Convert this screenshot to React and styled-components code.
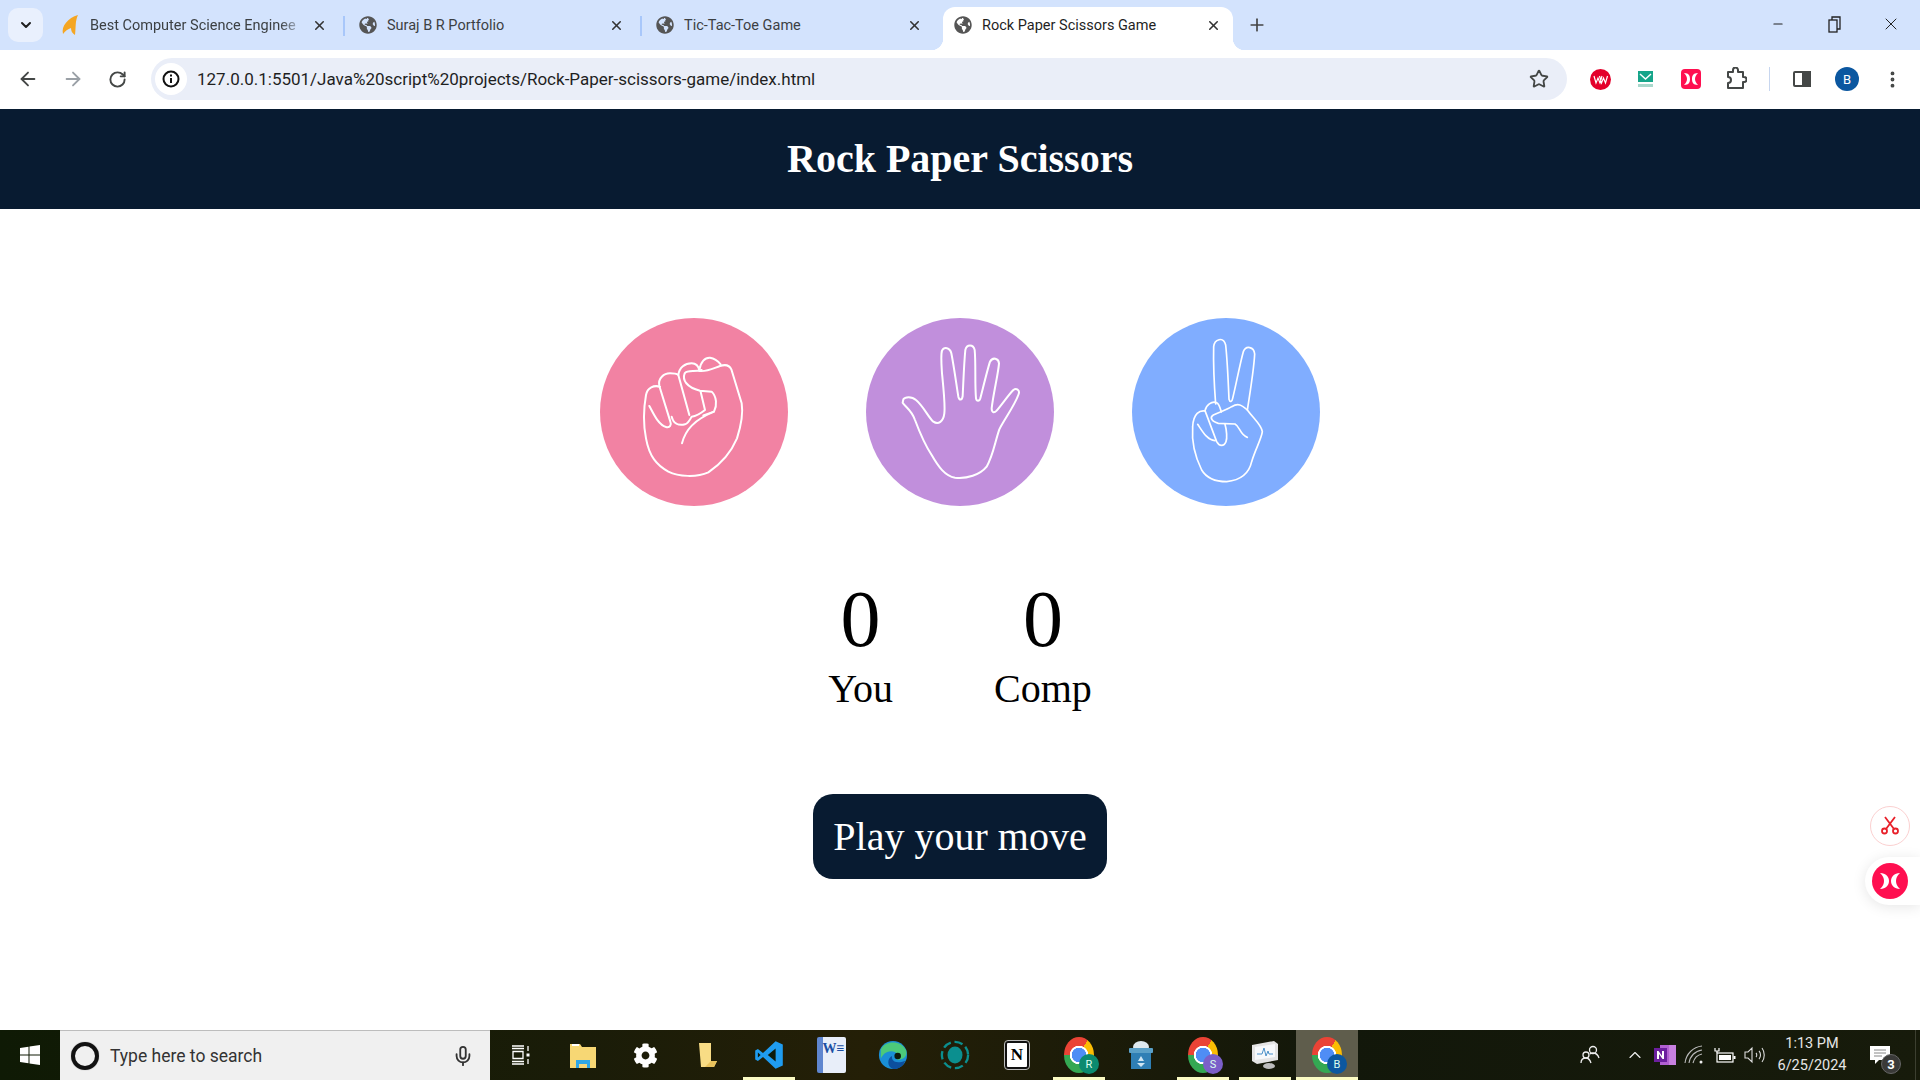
import React from 'react';
import styled, { createGlobalStyle } from 'styled-components';
import { ArrowLeft, ArrowRight, RotateCw, Star, MoreVertical, ChevronDown, ChevronUp, Minus, Plus, X, Mic } from 'lucide-react';
import { FaGlobeAmericas, FaCog } from 'react-icons/fa';

const GlobalStyle = createGlobalStyle`
  html, body { margin: 0; padding: 0; background: #fff; }
  body { font-family: "Liberation Serif", "Times New Roman", serif; overflow: hidden; }
  * { box-sizing: border-box; }
`;

const uiFont = `Roboto, "Open Sans", sans-serif`;

const Page = styled.div`
  width: 1920px;
  height: 1080px;
  display: flex;
  flex-direction: column;
`;

const TabStrip = styled.div`
  height: 50px;
  background: #d3e3fd;
  display: flex;
  align-items: flex-end;
  padding-left: 8px;
  font-family: ${uiFont};
`;
const TabSearch = styled.div`
  width: 35px;
  height: 34px;
  margin-bottom: 8px;
  margin-right: 5px;
  border-radius: 10px;
  background: #e9f0fd;
  display: flex;
  align-items: center;
  justify-content: center;
  color: #1f1f1f;
`;
const Tab = styled.div`
  position: relative;
  width: ${(props) => props.$width}px;
  height: 43px;
  padding: 0 ${(props) => props.$padRight}px 7px ${(props) => props.$padLeft}px;
  display: flex;
  align-items: center;
  font-size: 14.5px;
  color: #3c4043;
  background: ${(props) => (props.$active ? '#fff' : 'transparent')};
  border-radius: 12px 12px 0 0;
  ${(props) =>
    props.$active &&
    `
    color: #1f1f1f;
    &::before, &::after {
      content: "";
      position: absolute;
      bottom: 0;
      width: 12px;
      height: 12px;
    }
    &::before { left: -12px; background: radial-gradient(circle at 0 0, transparent 12px, #fff 12.5px); }
    &::after { right: -12px; background: radial-gradient(circle at 100% 0, transparent 12px, #fff 12.5px); }
  `}
`;
const TabDivider = styled.span`
  position: absolute;
  right: 0;
  top: 9px;
  width: 2px;
  height: 20px;
  background: #a8c7fa;
`;
const TabTitle = styled.span`
  flex: 1;
  margin-left: 10px;
  white-space: nowrap;
  mask-image: ${(props) => (props.$fade ? 'linear-gradient(90deg, #000 88%, transparent)' : 'none')};
`;
const TabClose = styled(X)`
  flex: none;
  color: #333;
  margin-left: 6px;
`;
const NewTab = styled.div`
  margin: 0 0 15px 14px;
  height: 20px;
  color: #444;
`;
const WindowControls = styled.div`
  margin-left: auto;
  height: 100%;
  display: flex;
  align-items: center;
  padding-bottom: 2px;
  color: #222;
`;
const WindowButton = styled.div`
  width: ${(props) => props.$width}px;
  display: flex;
  justify-content: center;
`;

const Toolbar = styled.div`
  height: 59px;
  background: #fff;
  border-radius: 10px 10px 0 0;
  display: flex;
  align-items: center;
  padding: 0 0 1px 5px;
`;
const NavButton = styled.div`
  width: 45px;
  display: flex;
  justify-content: center;
  color: ${(props) => (props.$disabled ? '#9aa0a6' : '#444746')};
`;
const Omnibox = styled.div`
  width: 1416px;
  height: 42px;
  margin-left: 11px;
  border-radius: 21px;
  background: #eaeef8;
  display: flex;
  align-items: center;
  padding: 0 18px 0 4px;
  font-family: ${uiFont};
  font-size: 17px;
  color: #1f1f1f;
`;
const InfoBadge = styled.div`
  width: 32px;
  height: 32px;
  border-radius: 50%;
  background: #fff;
  display: flex;
  align-items: center;
  justify-content: center;
  margin-right: 10px;
`;
const UrlText = styled.span`
  flex: 1;
  white-space: nowrap;
`;
const ExtensionBar = styled.div`
  flex: 1;
  display: flex;
  align-items: center;
  padding-left: 11px;
  color: #444746;
`;
const ExtensionSlot = styled.div`
  width: ${(props) => props.$width || 45}px;
  display: flex;
  justify-content: center;
`;
const ToolbarDivider = styled.div`
  width: 1px;
  height: 24px;
  background: #c7d6ef;
  margin: 0 10px 0 11px;
`;
const ProfileBadge = styled.div`
  width: 24px;
  height: 24px;
  border-radius: 50%;
  background: #0b57a0;
  color: #fff;
  font-family: ${uiFont};
  font-size: 13px;
  display: flex;
  align-items: center;
  justify-content: center;
`;

const Header = styled.header`
  height: 100px;
  padding-bottom: 1px;
  background: #081b31;
  color: #fff;
  display: flex;
  align-items: center;
  justify-content: center;
`;
const Title = styled.h1`
  margin: 0;
  font-size: 40px;
  font-weight: 700;
`;

const Main = styled.main`
  position: relative;
  flex: 1;
  display: flex;
  flex-direction: column;
  align-items: center;
  padding-top: 109px;
  background: #fff;
`;
const Choices = styled.div`
  display: flex;
  gap: 78px;
`;
const Choice = styled.div`
  width: 188px;
  height: 188px;
  border-radius: 50%;
  background: ${(props) => props.$color};
`;
const Scores = styled.div`
  display: flex;
  gap: 101px;
  margin-top: 68px;
  text-align: center;
  color: #000;
`;
const ScoreNumber = styled.div`
  font-size: 80px;
`;
const ScoreLabel = styled.div`
  font-size: 40px;
`;
const PlayButton = styled.div`
  margin-top: 82px;
  width: 294px;
  height: 85px;
  border-radius: 20px;
  background: #081b31;
  color: #fff;
  font-size: 40px;
  display: flex;
  align-items: center;
  justify-content: center;
`;
const FloatCut = styled.div`
  position: absolute;
  left: 1870px;
  top: 597px;
  width: 40px;
  height: 40px;
  border-radius: 50%;
  background: #fff;
  border: 1px solid #fbd0d0;
  display: flex;
  align-items: center;
  justify-content: center;
`;
const FloatDock = styled.div`
  position: absolute;
  right: 0;
  top: 648px;
  width: 55px;
  height: 48px;
  border-radius: 24px 0 0 24px;
  background: #fff;
  box-shadow: 0 2px 14px rgba(0, 0, 0, 0.1);
  display: flex;
  align-items: center;
  padding-left: 7px;
`;

const Taskbar = styled.footer`
  height: 50px;
  display: flex;
  background: linear-gradient(90deg, #0f1a05 0%, #1a1c08 30%, #241f07 45%, #12170a 70%, #171b0b 100%);
  font-family: ${uiFont};
  color: #fff;
`;
const StartButton = styled.div`
  width: 60px;
  display: flex;
  align-items: center;
  justify-content: center;
`;
const SearchBox = styled.div`
  width: 430px;
  background: #f0f0f0;
  border-top: 1px solid #bdbdbd;
  display: flex;
  align-items: center;
  padding: 0 16px 0 11px;
  color: #333;
  font-size: 17.5px;
`;
const CortanaRing = styled.div`
  width: 28px;
  height: 28px;
  border-radius: 50%;
  border: 4px solid #111;
  box-shadow: 0 0 1px #777;
  margin-right: 11px;
`;
const SearchText = styled.span`
  flex: 1;
`;
const TaskSlot = styled.div`
  position: relative;
  width: 62px;
  display: flex;
  align-items: center;
  justify-content: center;
  background: ${(props) => (props.$active ? '#5f5d4c' : 'transparent')};
  &::after {
    content: "";
    display: ${(props) => (props.$open ? 'block' : 'none')};
    position: absolute;
    bottom: 0;
    left: ${(props) => (props.$active ? 0 : 5)}px;
    right: ${(props) => (props.$active ? 0 : 5)}px;
    height: 3px;
    background: #fbfbc4;
  }
`;
const Tray = styled.div`
  margin-left: auto;
  display: flex;
  align-items: center;
  padding-right: 4px;
`;
const TrayIcon = styled.div`
  width: 30px;
  display: flex;
  justify-content: center;
  margin-right: ${(props) => props.$gap || 0}px;
  color: #eee;
`;
const Clock = styled.div`
  width: 84px;
  text-align: center;
  font-size: 14.5px;
  line-height: 22px;
  color: #e6e6e6;
`;
const Notifications = styled.div`
  position: relative;
  width: 52px;
  height: 100%;
  margin-right: 9px;
  display: flex;
  align-items: center;
  justify-content: center;
`;
const NotifCount = styled.span`
  position: absolute;
  left: 27px;
  top: 24px;
  width: 20px;
  height: 20px;
  border-radius: 50%;
  background: #3a3a38;
  border: 1px solid #666;
  font-size: 13px;
  font-weight: 700;
  display: flex;
  align-items: center;
  justify-content: center;
`;
const ShowDesktop = styled.div`
  width: 1px;
  height: 100%;
  background: #3c3f30;
`;

const ChromeBall = styled.div`
  position: relative;
  width: 30px;
  height: 36px;
  display: flex;
  align-items: center;
  justify-content: center;
  &::before {
    content: "";
    width: 30px;
    height: 36px;
    border-radius: 50%;
    background: radial-gradient(circle, #4f8df5 0 7px, #fff 7.5px 9px, transparent 9.5px),
      conic-gradient(from 30deg, #fbbc04 0 120deg, #34a853 120deg 240deg, #ea4335 240deg 360deg);
  }
`;
const ChromeProfile = styled.span`
  position: absolute;
  right: -5px;
  bottom: -1px;
  width: 20px;
  height: 20px;
  border-radius: 50%;
  background: ${(props) => props.$color};
  font-size: 11px;
  color: #dfe;
  display: flex;
  align-items: center;
  justify-content: center;
`;
const WordDoc = styled.div`
  width: 29px;
  height: 36px;
  background: linear-gradient(90deg, #5f86cf 0 22%, #e8eef9 22%);
  border-radius: 2px;
  color: #1b4fa3;
  font-family: "Liberation Serif", serif;
  font-weight: 700;
  font-size: 14px;
  padding: 4px 0 0 6px;
`;
const NotionBox = styled.div`
  width: 24px;
  height: 28px;
  background: #fff;
  border: 2px solid #111;
  outline: 1px solid #bbb;
  border-radius: 3px;
  color: #000;
  font-family: "Liberation Serif", serif;
  font-weight: 700;
  font-size: 17px;
  display: flex;
  align-items: center;
  justify-content: center;
`;

const FistIcon = () => (
  <svg width="188" height="188" viewBox="30 24 564 564" fill="none" stroke="#fff" strokeWidth="6" strokeLinecap="round" strokeLinejoin="round">
    <path d="M210 230C192 225 172 232 168 255C160 300 160 345 168 385C178 440 200 465 235 485C265 500 320 503 355 487C392 462 422 430 441 385C452 350 460 310 455 280L424 178C418 165 405 163 390 168C370 175 350 186 328 183" />
    <path d="M178 288C190 310 205 345 228 351C240 354 245 345 241 335L208 228C203 205 222 190 240 190C250 190 258 190 265 195" />
    <path d="M245 320C250 340 265 348 285 343C295 340 300 330 305 320C320 318 335 308 345 300L332 245" />
    <path d="M265 195L298 315M265 195C268 172 285 160 305 160C315 160 325 165 328 182" />
    <path d="M328 180C332 155 345 142 360 143C375 145 388 158 392 163" />
    <path d="M335 180C315 187 292 178 284 190C276 210 290 232 330 242L365 245C380 260 382 285 372 305L340 316" />
    <path d="M276 400C286 360 312 330 372 305" />
  </svg>
);

const PaperIcon = () => (
  <svg width="188" height="188" viewBox="-42 -36 564 564" fill="none" stroke="#fff" strokeWidth="6" strokeLinecap="round" strokeLinejoin="round">
    <path d="M70 208C75 200 95 198 108 210C130 228 145 262 160 275C175 285 190 275 193 250C196 225 190 170 186 130C184 100 182 75 186 62C192 50 210 52 214 70C222 110 230 170 235 200C238 212 246 212 248 198C250 160 252 100 256 60C260 42 280 42 284 60C288 100 284 160 288 205C290 215 298 215 301 205C310 170 322 120 330 95C338 80 356 85 357 100C355 130 340 190 335 235C335 248 342 250 350 242C365 225 385 195 400 180C410 172 420 182 416 192C405 225 375 265 358 298C345 335 340 375 320 410C300 435 260 447 225 443C195 438 175 410 155 375C135 345 120 310 105 270C95 240 75 230 68 218Z" />
  </svg>
);

const ScissorsIcon = () => (
  <svg width="188" height="188" viewBox="-114 -36 564 564" fill="none" stroke="#fff" strokeWidth="5" strokeLinecap="round" strokeLinejoin="round">
    <path d="M137 222C133 170 130 90 131 50C133 28 160 18 167 45C172 90 175 160 177 208C180 218 186 216 188 205C198 165 210 100 220 65C228 45 252 50 254 72C252 115 240 190 232 240" />
    <path d="M105 242C108 226 125 212 140 218C148 222 150 232 154 246" />
    <path d="M165 283C170 300 172 325 168 335C162 350 148 350 140 335L105 242" />
    <path d="M105 243C90 240 70 250 68 290C65 330 75 380 95 420C110 445 140 455 170 455C200 452 235 440 245 395C255 360 275 325 277 305C275 285 250 265 232 240C215 225 205 218 185 230C170 240 150 245 130 255C118 262 125 275 145 280L195 282C210 290 210 315 232 322" />
    <path d="M83 283C95 300 110 330 135 332" />
  </svg>
);

const WindowsLogo = () => (
  <svg width="20" height="20" viewBox="0 0 20 20" fill="#fff">
    <path d="M0 3l8.500-1.200V9.500H0zM9.500 1.600L20 0V9.500H9.500zM0 10.500h8.500v7.700L0 17zM9.500 10.500H20V20L9.500 18.400z" />
  </svg>
);
const TaskViewIcon = () => (
  <svg width="20" height="20" viewBox="0 0 20 20" fill="none" stroke="#fff" strokeWidth="1.300">
    <path d="M1 1h12M1 3.500h12M2 6.500h10v7H2zM1 16.500h12M1 19h12M17 1v5M17 14v5" />
    <path d="M15.500 8.500h3v3h-3z" fill="#fff" stroke="none" />
  </svg>
);
const FolderIcon = () => (
  <svg width="28" height="26" viewBox="0 0 28 26">
    <path d="M1 2h10l2 3h14v21H1z" fill="#f7d774" />
    <rect x="3" y="2" width="7" height="2" fill="#fff" />
    <path d="M7 26V18h14v8h-3v-4h-8v4z" fill="#2ea6e6" />
    <rect x="10" y="22" width="8" height="4" fill="#f5d67a" />
  </svg>
);
const StickyIcon = () => (
  <svg width="24" height="28" viewBox="0 0 24 28">
    <path d="M4 2h12v18h6l-3 6H6z" fill="#f8dc85" />
    <path d="M16 20h6l-3 6H10z" fill="#e8c25c" />
  </svg>
);
const VsCodeIcon = () => (
  <svg width="30" height="32" viewBox="0 0 100 100">
    <path d="M72 4L96 15V85L72 96L30 57L13 70L4 65V35L13 30L30 43z" fill="#1f9cf0" />
    <path d="M72 28L46 50L72 72z" fill="#0d1a0b" />
    <path d="M13 42v16l9-8z" fill="#0d1a0b" />
  </svg>
);
const EdgeIcon = () => (
  <svg width="30" height="32" viewBox="0 0 32 32">
    <circle cx="16" cy="16" r="15" fill="#1a8fd6" />
    <path d="M3 10C7 1 24 -1 30 11C32 18 26 22 20 21C24 17 20 12 14 12C8 12 5 16 3 20z" fill="#4cc97a" />
    <path d="M16 31C9 28 10 19 15 17C14 22 19 26 29 22C27 28 22 31 16 31z" fill="#0c4f9e" />
    <circle cx="21" cy="17" r="3.500" fill="#0d1a0b" />
  </svg>
);
const TealIcon = () => (
  <svg width="30" height="32" viewBox="0 0 32 32" fill="none">
    <ellipse cx="16" cy="16" rx="8" ry="9" fill="#0b8f8f" />
    <circle cx="16" cy="16" r="14" stroke="#0b8f8f" strokeWidth="2.500" strokeDasharray="9 4" />
  </svg>
);
const BinIcon = () => (
  <svg width="26" height="30" viewBox="0 0 26 30">
    <ellipse cx="13" cy="7" rx="8" ry="6" fill="#dfe9ef" />
    <rect x="1" y="8" width="24" height="5" rx="1" fill="#5aa0c8" />
    <path d="M3 13h20v16H3z" fill="#2f7fb5" />
    <path d="M13 16l3 5h-6zM9 23h8l-4 4z" fill="#cfe6f3" />
  </svg>
);
const MonitorIcon = () => (
  <svg width="28" height="30" viewBox="0 0 28 30">
    <path d="M1 5l22-4 4 3v16L6 24 1 21z" fill="#e4e4e4" />
    <path d="M4 7l20-3v13L4 20z" fill="#f7f9fb" />
    <path d="M6 14h5l2-6 2 8 2-5 1 3h4" fill="none" stroke="#4a90c8" strokeWidth="1" />
    <ellipse cx="18" cy="26" rx="6" ry="3" fill="#bdbdbd" />
  </svg>
);
const PeopleIcon = () => (
  <svg width="20" height="20" viewBox="0 0 20 20" fill="none" stroke="#eee" strokeWidth="1.300">
    <circle cx="13" cy="5" r="3.500" />
    <circle cx="6" cy="10" r="3" />
    <path d="M1 18c0-3 2-5 5-5s4 2 5 5M10 9c1-1 2-1 3-1 3 0 5 2 6 5" />
  </svg>
);
const OneNoteIcon = () => (
  <svg width="22" height="20" viewBox="0 0 22 20">
    <rect x="6" y="0" width="16" height="20" fill="#b15fd1" />
    <rect x="15" y="0" width="7" height="20" fill="#c77fe0" />
    <rect x="0" y="3" width="13" height="14" fill="#6b1f9e" />
    <path d="M3 14V6h1.500l3.500 5V6H10v8H8.500L5 9v5z" fill="#fff" />
  </svg>
);
const WifiIcon = () => (
  <svg width="22" height="20" viewBox="0 0 22 20" fill="none" stroke="#bbb" strokeWidth="1.100">
    <path d="M1 18C2 9 9 2 18 1M5 18C6 11 11 6 18 5M9 18C10 14 13 10 18 9" />
    <circle cx="17" cy="17" r="1.500" fill="#eee" stroke="none" />
  </svg>
);
const BatteryIcon = () => (
  <svg width="22" height="16" viewBox="0 0 22 16" fill="none" stroke="#fff" strokeWidth="1.200">
    <path d="M1 1v3h4V1M3 4v2" />
    <rect x="3" y="6" width="16" height="9" />
    <rect x="5" y="8" width="12" height="5" fill="#fff" stroke="none" />
    <rect x="19.500" y="9" width="2" height="3" fill="#fff" stroke="none" />
  </svg>
);
const VolumeIcon = () => (
  <svg width="22" height="18" viewBox="0 0 22 18" fill="none" stroke="#ddd" strokeWidth="1.100">
    <path d="M1 6h3l4-4v14l-4-4H1zM12 7c1 1 1 3 0 4M15 5c2 2 2 6 0 8M18 2c3 4 3 10 0 14" />
  </svg>
);
const NotifIcon = () => (
  <svg width="20" height="18" viewBox="0 0 20 18" fill="#fff">
    <path d="M0 0h20v14H9l-4 4v-4H0z" />
    <path d="M4 4h12M4 7h12M4 10h8" stroke="#888" strokeWidth="1" />
  </svg>
);
const MiniScissors = () => (
  <svg width="20" height="20" viewBox="0 0 20 20" fill="none" stroke="#e8202a" strokeWidth="1.800">
    <circle cx="4.500" cy="15" r="2.500" />
    <circle cx="15.500" cy="15" r="2.500" />
    <path d="M6 13L15 1M14 13L5 1" />
  </svg>
);
const BrandMark = ({ size }) => (
  <svg width={size} height={size} viewBox="0 0 36 36">
    <circle cx="18" cy="18" r="18" fill="#ff0f50" />
    <path d="M8 10c6 0 9 4 9 8s-3 8-9 8c3-3 4-5 4-8s-1-5-4-8zM28 10c-6 0-9 4-9 8s3 8 9 8c-3-3-4-5-4-8s1-5 4-8z" fill="#fff" />
  </svg>
);
const BrandSquare = () => (
  <svg width="20" height="20" viewBox="0 0 20 20">
    <rect width="20" height="20" rx="4" fill="#ff0f50" />
    <path d="M3 4c5 0 6 3 6 6s-1 6-6 6c2-2 3-4 3-6s-1-4-3-6zM17 4c-5 0-6 3-6 6s1 6 6 6c-2-2-3-4-3-6s1-4 3-6z" fill="#fff" />
  </svg>
);
const VwBadge = () => (
  <svg width="21" height="21" viewBox="0 0 21 21">
    <circle cx="10.500" cy="10.500" r="10.500" fill="#e4002b" />
    <path d="M4 7l2 7 2-5 2 5 2-7M9.500 7l2 7 2-5 2 5 2-7" fill="none" stroke="#fff" strokeWidth="1.200" />
  </svg>
);
const MailBadge = () => (
  <svg width="15" height="17" viewBox="0 0 15 17">
    <rect width="15" height="11" fill="#16a58a" />
    <path d="M2 3l5.500 5L13 3" fill="none" stroke="#fff" strokeWidth="1.500" />
    <rect y="13" width="15" height="3" fill="#a9d8cc" />
  </svg>
);
const PuzzleIcon = () => (
  <svg width="22" height="24" viewBox="0 0 22 24" fill="none" stroke="#444746" strokeWidth="2" strokeLinejoin="round">
    <path d="M3 5h5V3a2.500 2.500 0 0 1 5 0v2h5v5h1a2.500 2.500 0 0 1 0 5h-1v6H3v-5a3 3 0 0 0 0-6z" />
  </svg>
);
const SidePanelIcon = () => (
  <svg width="20" height="20" viewBox="0 0 20 20" fill="none" stroke="#444746" strokeWidth="2">
    <rect x="2" y="3" width="16" height="14" rx="1" />
    <rect x="11" y="3" width="7" height="14" fill="#444746" />
  </svg>
);
const RestoreIcon = () => (
  <svg width="13" height="17" viewBox="0 0 13 17" fill="none" stroke="#222" strokeWidth="1.300">
    <rect x="1" y="4" width="8" height="12" />
    <path d="M4 4V1h8v12h-3" />
  </svg>
);
const FlameIcon = () => (
  <svg width="20" height="22" viewBox="0 0 20 22">
    <path d="M3 20C1 12 8 4 18 1C15 7 16 14 15 21C12 19 11 17 11 14C8 15 5 17 3 20z" fill="#f5a623" />
  </svg>
);

const tabs = [
  { title: 'Best Computer Science Enginee', width: 297, padLeft: 12, padRight: 18, favicon: 'flame', fade: true, divider: true },
  { title: 'Suraj B R Portfolio', width: 297, padLeft: 14, padRight: 18, divider: true },
  { title: 'Tic-Tac-Toe Game', width: 301, padLeft: 14, padRight: 21 },
  { title: 'Rock Paper Scissors Game', width: 290, padLeft: 11, padRight: 12, active: true },
];

const TaskApps = [
  { key: 'view', icon: <TaskViewIcon /> },
  { key: 'files', icon: <FolderIcon /> },
  { key: 'settings', icon: <FaCog size={25} color="#fff" /> },
  { key: 'sticky', icon: <StickyIcon /> },
  { key: 'code', icon: <VsCodeIcon />, open: true },
  { key: 'word', icon: <WordDoc>W≡</WordDoc> },
  { key: 'edge', icon: <EdgeIcon /> },
  { key: 'teal', icon: <TealIcon /> },
  { key: 'notion', icon: <NotionBox>N</NotionBox> },
  { key: 'chromeR', icon: <ChromeBall><ChromeProfile $color="#0b8a6f">R</ChromeProfile></ChromeBall>, open: true },
  { key: 'bin', icon: <BinIcon /> },
  { key: 'chromeS', icon: <ChromeBall><ChromeProfile $color="#7b5fc9">S</ChromeProfile></ChromeBall>, open: true },
  { key: 'monitor', icon: <MonitorIcon />, open: true },
  { key: 'chromeB', icon: <ChromeBall><ChromeProfile $color="#0b57a0">B</ChromeProfile></ChromeBall>, open: true, active: true },
];

const App = () => {
  return (
    <Page>
      <GlobalStyle />
      <TabStrip>
        <TabSearch><ChevronDown size={16} strokeWidth={3} /></TabSearch>
        {tabs.map((tab) => (
          <Tab key={tab.title} $width={tab.width} $padLeft={tab.padLeft} $padRight={tab.padRight} $active={tab.active}>
            {tab.favicon === 'flame' ? <FlameIcon /> : <FaGlobeAmericas size={18} color="#555" />}
            <TabTitle $fade={tab.fade}>{tab.title}</TabTitle>
            <TabClose size={15} strokeWidth={2.5} />
            {tab.divider && <TabDivider />}
          </Tab>
        ))}
        <NewTab><Plus size={20} /></NewTab>
        <WindowControls>
          <WindowButton $width={56}><Minus size={14} /></WindowButton>
          <WindowButton $width={56}><RestoreIcon /></WindowButton>
          <WindowButton $width={58}><X size={20} strokeWidth={1.2} /></WindowButton>
        </WindowControls>
      </TabStrip>
      <Toolbar>
        <NavButton><ArrowLeft size={22} /></NavButton>
        <NavButton $disabled><ArrowRight size={22} /></NavButton>
        <NavButton><RotateCw size={19} strokeWidth={2.4} /></NavButton>
        <Omnibox>
          <InfoBadge>
            <svg width="18" height="18" viewBox="0 0 18 18" fill="none" stroke="#111" strokeWidth="2">
              <circle cx="9" cy="9" r="7.500" />
              <path d="M9 8v5M9 4.500v2" />
            </svg>
          </InfoBadge>
          <UrlText>127.0.0.1:5501/Java%20script%20projects/Rock-Paper-scissors-game/index.html</UrlText>
          <Star size={20} color="#444746" strokeWidth={2.2} />
        </Omnibox>
        <ExtensionBar>
          <ExtensionSlot><VwBadge /></ExtensionSlot>
          <ExtensionSlot><MailBadge /></ExtensionSlot>
          <ExtensionSlot><BrandSquare /></ExtensionSlot>
          <ExtensionSlot><PuzzleIcon /></ExtensionSlot>
          <ToolbarDivider />
          <ExtensionSlot $width={44}><SidePanelIcon /></ExtensionSlot>
          <ExtensionSlot $width={46}><ProfileBadge>B</ProfileBadge></ExtensionSlot>
          <ExtensionSlot $width={44}><MoreVertical size={21} strokeWidth={2.4} /></ExtensionSlot>
        </ExtensionBar>
      </Toolbar>
      <Header>
        <Title>Rock Paper Scissors</Title>
      </Header>
      <Main>
        <Choices>
          <Choice $color="#f282a3"><FistIcon /></Choice>
          <Choice $color="#c18fdc"><PaperIcon /></Choice>
          <Choice $color="#80adff"><ScissorsIcon /></Choice>
        </Choices>
        <Scores>
          <div>
            <ScoreNumber>0</ScoreNumber>
            <ScoreLabel>You</ScoreLabel>
          </div>
          <div>
            <ScoreNumber>0</ScoreNumber>
            <ScoreLabel>Comp</ScoreLabel>
          </div>
        </Scores>
        <PlayButton>Play your move</PlayButton>
        <FloatCut><MiniScissors /></FloatCut>
        <FloatDock><BrandMark size={36} /></FloatDock>
      </Main>
      <Taskbar>
        <StartButton><WindowsLogo /></StartButton>
        <SearchBox>
          <CortanaRing />
          <SearchText>Type here to search</SearchText>
          <Mic size={22} color="#333" />
        </SearchBox>
        {TaskApps.map((app) => (
          <TaskSlot key={app.key} $open={app.open} $active={app.active}>{app.icon}</TaskSlot>
        ))}
        <Tray>
          <TrayIcon $gap={15}><PeopleIcon /></TrayIcon>
          <TrayIcon><ChevronUp size={20} strokeWidth={1.4} /></TrayIcon>
          <TrayIcon><OneNoteIcon /></TrayIcon>
          <TrayIcon><WifiIcon /></TrayIcon>
          <TrayIcon><BatteryIcon /></TrayIcon>
          <TrayIcon><VolumeIcon /></TrayIcon>
          <Clock>1:13 PM<br />6/25/2024</Clock>
          <Notifications>
            <NotifIcon />
            <NotifCount>3</NotifCount>
          </Notifications>
          <ShowDesktop />
        </Tray>
      </Taskbar>
    </Page>
  );
};

export default App;
